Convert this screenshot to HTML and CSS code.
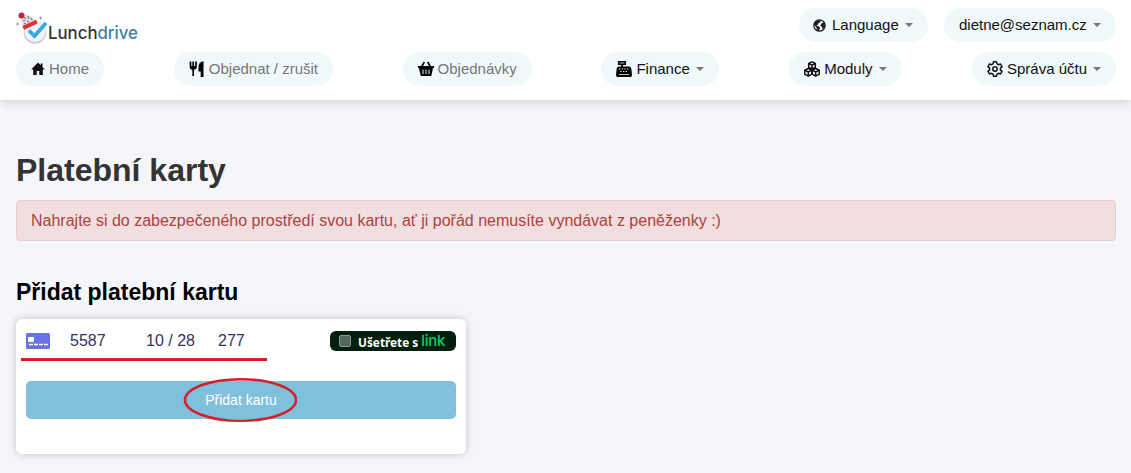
FILE: index.html
```
<!DOCTYPE html>
<html lang="cs">
<head>
  <meta charset="UTF-8" />
  <meta name="viewport" content="width=device-width, initial-scale=1.0" />
  <title>Lunchdrive - Platební karty</title>
  <link rel="stylesheet" href="styles.css">
</head>
<body>
  <header class="header">
    <div class="topbar">
      <a class="logo" href="#">
        <svg width="124" height="34" viewBox="0 0 124 34">
          <circle cx="19" cy="20.500" r="11.300" fill="#c9cbdb" />
          <circle cx="19" cy="19.500" r="10.500" fill="#f3f4fa" />
          <path d="M6 14L5 4Q12 1 16 5L20 9z" fill="#e4dfdf" />
          <path d="M8 5l2 2M12 4l1 3M7 9l2-1M11 9l2 1M15 6l1 2M8 12l2-1" stroke="#676064" stroke-width="1" />
          <path d="M9 15L19 10.500" stroke="#df3035" stroke-width="4" stroke-linecap="square" />
          <circle cx="5.500" cy="3.500" r="3" fill="#b92b38" />
          <path d="M13 18.500l5.500 5.500L30 11" fill="none" stroke="#34a9e5" stroke-width="3.800" />
          <path d="M0 12h3M1.500 10.500v3M23 6h3M24.500 4.500v3" stroke="#a09da4" stroke-width="1" />
          <text class="logo-text" x="32" y="27" textLength="90" lengthAdjust="spacingAndGlyphs"><tspan fill="#333438">Lunch</tspan><tspan fill="#427fa5">drive</tspan></text>
        </svg>
      </a>
      <div class="user-menu">
        <a class="pill language" href="#">
          <svg class="icon-globe" viewBox="0 0 16 16"><circle cx="8" cy="8" r="7" fill="#fff" stroke="#222" stroke-width="1.600" /><path fill="#222" d="M2 4l4-3 4 1-1 2-2 1-1 2-2 1 3 1 2 2-2 4-2-1-1-4-3-3zM11 5l3-1 1 5-3 4-1-3-2-2z" /></svg>
          <span>Language</span> <i class="caret"></i>
        </a>
        <a class="pill email" href="#"><span>dietne@seznam.cz</span> <i class="caret"></i></a>
      </div>
    </div>
    <nav class="nav">
      <a class="pill muted home" href="#">
        <svg class="icon-home" viewBox="0 0 14 14"><path fill="#111" d="M7 .5L.2 7.500h2V13h3.500V9h2.600v4h3.500V7.500h2L11.500 5V1.500H9.800v1.800z" /></svg>
        <span>Home</span>
      </a>
      <a class="pill muted order" href="#">
        <svg class="icon" viewBox="0 0 16 16"><path d="M1.500.5v5Q1.500 8 4.200 8T7 5.500v-5M4.200.5V15" fill="none" stroke="#000" stroke-width="1.700" /><path d="M1.500 5H7L6 7.500H2.500z" /><path d="M14.500.3V16h-2.800v-5.500H9.500V5Q10 1 14.500.3z" /></svg>
        <span>Objednat / zrušit</span>
      </a>
      <a class="pill muted orders" href="#">
        <svg class="icon" viewBox="0 0 16 16"><path d="M3.500 6L6.300 1M12.500 6L9.700 1" stroke="#000" stroke-width="1.600" /><path d="M0 5h16v2h-1l-1.500 7q-.2 1-1.200 1H3.700q-1 0-1.200-1L1 7H0z" /><path d="M5 8.500V13M8 8.500V13M11 8.500V13" stroke="#e6f0f1" /></svg>
        <span>Objednávky</span>
      </a>
      <a class="pill finance" href="#">
        <svg class="icon" viewBox="0 0 16 16"><path d="M2 0h8v4H7v1.500h6q2 0 2.300 2L16 14q0 2-1.500 2h-13Q0 16 0 14l.7-6.500q.3-2 2.300-2h2V4H2z" /><path d="M3.500 2h5" stroke="#8b9294" stroke-width="1.300" /><path d="M3 8h10M4.300 10.500h7.500" stroke="#dceaed" stroke-width="1.200" stroke-dasharray="1.400 1.300" /><path d="M3 13.500h10" stroke="#b5bfc1" /></svg>
        <span>Finance</span> <i class="caret"></i>
      </a>
      <a class="pill modules" href="#">
        <svg class="icon" viewBox="0 0 16 16"><path d="M8 .8l3.300 1.600v4L8 8 4.700 6.400v-4zM4.300 7.500l3.500 1.700v4l-3.500 2-3.600-2v-4zM11.700 7.500l3.600 1.700v4l-3.600 2-3.500-2v-4zM4.700 2.500L8 4.100l3.300-1.600M8 4v4M.7 9.200L4.300 11l3.500-1.800M4.300 11v4M8.200 9.200l3.500 1.800 3.600-1.800M11.700 11v4" fill="none" stroke="#111" stroke-width="1.500" stroke-linejoin="round" /></svg>
        <span>Moduly</span> <i class="caret"></i>
      </a>
      <a class="pill account" href="#">
        <svg class="icon" viewBox="0 0 16 16"><path d="M6.500.8h3l.5 2.100 1.400.8 2.100-.7L15 5.600l-1.600 1.500v1.800l1.600 1.500-1.500 2.600-2.100-.7-1.400.8-.5 2.100h-3L6 13.100l-1.400-.8-2.100.7L1 10.400l1.600-1.500V7.100L1 5.600 2.500 3l2.100.7L6 2.900z" fill="none" stroke="#111" stroke-width="1.500" stroke-linejoin="round" /><circle cx="8" cy="8" r="2.200" fill="none" stroke="#111" stroke-width="1.500" /></svg>
        <span>Správa účtu</span> <i class="caret"></i>
      </a>
    </nav>
  </header>

  <main class="content">
    <h1>Platební karty</h1>
    <div class="alert">Nahrajte si do zabezpečeného prostředí svou kartu, ať ji pořád nemusíte vyndávat z peněženky :)</div>

    <h2>Přidat platební kartu</h2>
    <form class="card-form">
      <div class="card-row">
        <svg class="card-icon" width="24" height="16" viewBox="0 0 24 16"><rect width="24" height="16" rx="1.500" fill="#6772e5" /><rect x="2" y="4" width="6" height="5" rx="1" fill="#fff" /><path d="M3 11.500h19" stroke="#fff" stroke-width="1.500" stroke-dasharray="4 1" /></svg>
        <span class="number">5587</span>
        <span class="expiry">10 / 28</span>
        <span class="cvc">277</span>
        <span class="link-badge"><i class="check"></i><b>Ušetřete s</b><span class="link-logo">link</span></span>
        <i class="underline"></i>
      </div>
      <button type="button">Přidat kartu
        <svg class="ring" width="114" height="46"><ellipse cx="57.500" cy="23" rx="55.500" ry="20.800" fill="none" stroke="#d3202c" stroke-width="2.600" /></svg>
      </button>
    </form>
  </main>
</body>
</html>
```
FILE: styles.css
```
* { box-sizing: border-box; }
body { margin: 0; background: #f4f6fa; color: #000; font-family: "Liberation Sans", Arial, sans-serif; height: 473px; overflow: hidden; }
svg { display: block; flex-shrink: 0; }

.header { height: 100px; padding: 8px 15px 0 16px; background: #fff; box-shadow: 0 2px 10px rgba(0, 0, 0, 0.16); }
.topbar { display: flex; justify-content: space-between; height: 44px; }
.logo { padding-top: 4px; }
.logo-text { font-family: Inter, sans-serif; font-size: 17.500px; font-weight: 500; }
.user-menu { display: flex; gap: 16px; }
.nav { display: flex; justify-content: space-between; }

.pill { display: flex; align-items: center; gap: 4px; height: 34px; padding: 0 14px; border-radius: 17px; background: #f0f8fa; color: #111; font-size: 15px; text-decoration: none; white-space: nowrap; }
.pill span { padding-bottom: 2px; }
.muted { color: #777; }
.icon { width: 16px; height: 16px; }
.icon-home { width: 14px; height: 14px; }
.icon-globe { width: 13px; height: 13px; margin-right: 2px; }
.caret { margin: 0 1px 0 2px; border: 4px solid transparent; border-top-color: #777; border-bottom: 0; }
.language { width: 129px; }
.email { width: 172px; padding-left: 15px; }
.home { width: 88px; padding-left: 15px; }
.order { width: 159px; padding-left: 15px; }
.orders { width: 129px; padding-left: 15px; }
.finance { width: 118px; padding-left: 15px; }
.modules { width: 113px; padding-left: 15px; }
.account { width: 144px; padding-left: 15px; }

.content { padding: 51px 15px 0 16px; }
h1 { margin: 0; height: 49px; color: #333; font-size: 32px; line-height: 38px; }
h2 { margin: 37px 0 12px; font-size: 23px; line-height: 29px; }
.alert { height: 41px; padding: 0 14px; border: 1px solid #ebccd1; border-radius: 4px; background: #f2dede; color: #a94442; font-size: 16px; line-height: 39px; }

.card-form { width: 450px; height: 135px; padding: 10px; border-radius: 6px; background: #fff; box-shadow: 0 0 8px rgba(0, 0, 0, 0.2); }
.card-row { position: relative; display: flex; align-items: center; height: 24px; margin-bottom: 28px; color: #32325d; font-size: 16px; }
.number { width: 76px; margin-left: 20px; }
.expiry { width: 72px; }
.link-badge { display: flex; align-items: center; width: 126px; height: 20px; margin-left: auto; padding-left: 9px; border-radius: 6px; background: #011e0f; color: #fff; font-family: "Noto Sans", sans-serif; font-size: 12px; }
.check { width: 12px; height: 12px; margin-right: 7px; border: 1px solid #8b9b91; border-radius: 2px; background: #53685c; }
.link-badge b { padding-top: 1px; font-size: 11.800px; }
.link-logo { margin-left: 3px; padding-bottom: 1px; color: #00d066; font-family: Inter, sans-serif; font-size: 15px; font-weight: 500; letter-spacing: -0.3px; line-height: 18px; }
.underline { position: absolute; left: -5px; top: 29px; width: 246px; height: 3px; background: #d3202c; }

button { position: relative; display: block; width: 430px; height: 38px; padding: 0; border: 0; border-radius: 5px; background: #80c0dc; color: #fff; font-family: inherit; font-size: 14px; }
.ring { position: absolute; left: 157px; top: -4px; }
```
